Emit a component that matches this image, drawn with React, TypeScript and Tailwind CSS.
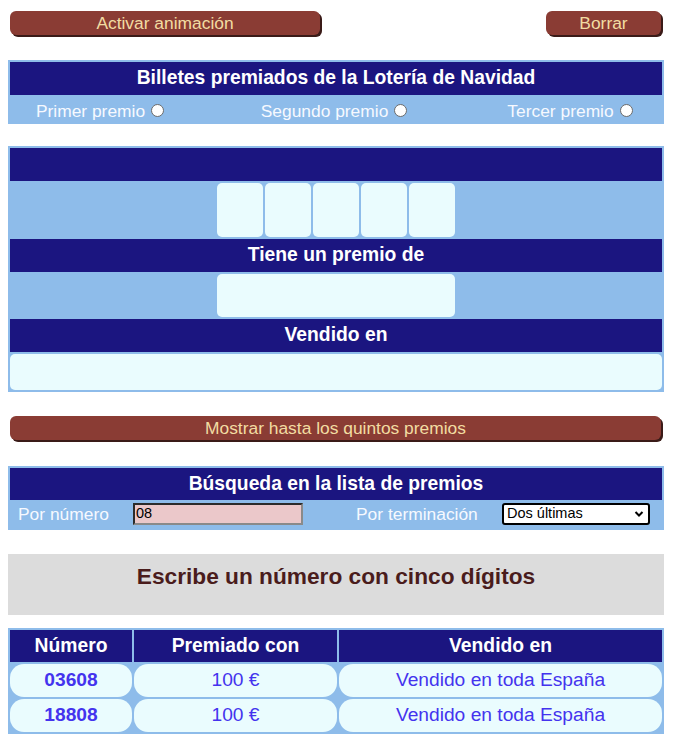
import React from 'react';

const navy = 'bg-[#1b1580]';

const Boton: React.FC<{ label: string; className?: string }> = ({ label, className = '' }) => (
  <button
    className={`h-[24px] rounded-[6px] bg-[#8a3c34] text-[17.4px] leading-[24px] text-[#f2dca2] shadow-[2px_2px_0_#3a1b18] ${className}`}
  >
    {label}
  </button>
);

const Radio: React.FC<{ label: string }> = ({ label }) => (
  <div className="flex items-center justify-center gap-[6px] text-[17.4px] text-[#f6f9ff]">
    <span>{label}</span>
    <span className="mb-[2px] inline-block h-[13px] w-[13px] rounded-full border border-[#6b6b6b] bg-white" />
  </div>
);

const Cabecera: React.FC<{ children?: React.ReactNode; h?: string }> = ({ children, h = 'h-[33px]' }) => (
  <div className={`${navy} ${h} flex items-center justify-center text-[19.3px] font-bold text-white`}>
    {children}
  </div>
);

const premios = [
  { numero: '03608', premio: '100 €', lugar: 'Vendido en toda España' },
  { numero: '18808', premio: '100 €', lugar: 'Vendido en toda España' },
];

export default function App() {
  return (
    <div className="w-[684px] bg-white pt-[11px] pb-[20px]" style={{ fontFamily: '"Liberation Sans", Arial, sans-serif' }}>
      <div className="ml-[8px] w-[656px]">
        {/* botones de arriba */}
        <div className="flex justify-between pl-[2px] pr-[3px]">
          <Boton label="Activar animación" className="w-[310px]" />
          <Boton label="Borrar" className="w-[115px]" />
        </div>

        {/* billetes premiados */}
        <div className="mt-[25px] bg-[#8ebcea] p-[2px]">
          <Cabecera>Billetes premiados de la Lotería de Navidad</Cabecera>
          <div className="grid h-[27px] grid-cols-[180px_1fr_184px] items-center pt-[3px]">
            <Radio label="Primer premio" />
            <Radio label="Segundo premio" />
            <Radio label="Tercer premio" />
          </div>
        </div>

        {/* resultado */}
        <div className="mt-[22px] bg-[#8ebcea] p-[2px]">
          <Cabecera />
          <div className="flex h-[58px] items-start justify-center gap-[2px] pt-[2px]">
            {[0, 1, 2, 3, 4].map((i) => (
              <div key={i} className="h-[54px] w-[46px] rounded-[5px] bg-[#eafcfe]" />
            ))}
          </div>
          <Cabecera>Tiene un premio de</Cabecera>
          <div className="flex h-[47px] items-center justify-center">
            <div className="h-[43px] w-[238px] rounded-[5px] bg-[#eafcfe]" />
          </div>
          <Cabecera>Vendido en</Cabecera>
          <div className="pt-[2px]">
            <div className="h-[36px] w-full rounded-[5px] bg-[#eafcfe]" />
          </div>
        </div>

        <div className="mt-[24px] pl-[2px] pr-[3px]">
          <Boton label="Mostrar hasta los quintos premios" className="w-full" />
        </div>

        {/* búsqueda */}
        <div className="mt-[25px] bg-[#8ebcea] p-[2px]">
          <Cabecera h="h-[32px]">Búsqueda en la lista de premios</Cabecera>
          <div className="flex h-[28px] items-center text-[17.4px] text-[#f6f9ff]">
            <span className="ml-[8px] w-[115px]">Por número</span>
            <div className="flex h-[22px] w-[170px] items-center border-2 border-t-[#2b2b2b] border-l-[#2b2b2b] border-b-[#8a8a8a] border-r-[#8a8a8a] bg-[#ebc8ca] px-[1px] text-[14.5px] text-black">
              08
            </div>
            <span className="ml-[53px] w-[146px]">Por terminación</span>
            <div className="flex h-[22px] w-[148px] items-center justify-between rounded-[3px] border-2 border-black bg-white pl-[3px] pr-[4px] text-[14.5px] text-black">
              <span>Dos últimas</span>
              <svg width="10" height="8" viewBox="0 0 10 8">
                <polyline points="1.5,2 5,5.5 8.5,2" fill="none" stroke="black" strokeWidth="2" />
              </svg>
            </div>
          </div>
        </div>

        {/* aviso */}
        <div className="mt-[24px] h-[61px] bg-[#dcdcdc] pt-[5px] text-center text-[22.7px] font-bold text-[#4a1c1c]">
          Escribe un número con cinco dígitos
        </div>

        {/* lista */}
        <div className="mt-[13px] grid grid-cols-[122px_203px_1fr] gap-[2px] bg-[#8ebcea] p-[2px]">
          <Cabecera h="h-[32px]">Número</Cabecera>
          <Cabecera h="h-[32px]">Premiado con</Cabecera>
          <Cabecera h="h-[32px]">Vendido en</Cabecera>
          {premios.map((p) => (
            <React.Fragment key={p.numero}>
              <div className="flex h-[33px] items-center justify-center rounded-[14px] bg-[#eafcfe] text-[19.2px] font-bold text-[#4433ee]">
                {p.numero}
              </div>
              <div className="flex h-[33px] items-center justify-center rounded-[14px] bg-[#eafcfe] text-[19.2px] text-[#4433ee]">
                {p.premio}
              </div>
              <div className="flex h-[33px] items-center justify-center rounded-[14px] bg-[#eafcfe] text-[19.2px] text-[#4433ee]">
                {p.lugar}
              </div>
            </React.Fragment>
          ))}
        </div>
      </div>
    </div>
  );
}
